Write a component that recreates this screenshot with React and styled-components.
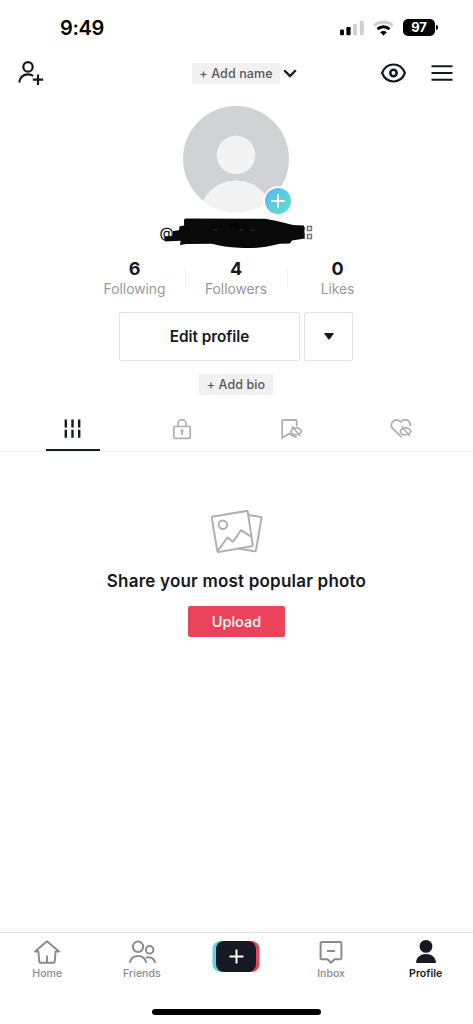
import React from 'react'
import styled, { createGlobalStyle } from 'styled-components'

const color = {
    ink: '#161823',
    black: '#000',
    grey1: '#8a8b8f',
    grey2: '#b0b0b2',
    pill: '#f1f1f2',
    line: '#e3e3e4',
    red: '#ea435a',
    cyan: '#62d3e3',
}

export default function App() {
    return (
        <Screen>
            <GlobalStyle />
            <StatusBar />
            <TopBar />
            <Profile />
            <Tabs />
            <Empty />
            <BottomNav />
        </Screen>
    )
}

function StatusBar() {
    return (
        <Status>
            <Time>9:49</Time>
            <StatusIcons>
                <svg width="24" height="16" viewBox="0 0 24 16">
                    <rect x="0" y="9.5" width="4" height="5.7" rx="1.2" />
                    <rect x="6.4" y="7" width="4.2" height="8.2" rx="1.2" />
                    <rect x="13" y="4" width="4.1" height="11.2" rx="1.2" fill="#d0d0d0" />
                    <rect x="19.7" y="0.8" width="4.1" height="14.4" rx="1.2" fill="#d0d0d0" />
                </svg>
                <svg width="21" height="16" viewBox="0 0 21 16" fill="none" strokeWidth="3">
                    <path d="M1.3 5.7C6.5 .8 14.5 .8 19.7 5.7" stroke="#cfcfcf" />
                    <path d="M4.5 9.2C8 6 13 6 16.5 9.2" stroke="#000" />
                    <path d="M7.1 12.2Q10.5 9.6 13.9 12.2L10.5 15.4Z" fill="#000" />
                </svg>
                <Battery>
                    <BatteryLevel>97</BatteryLevel>
                    <BatteryTip />
                </Battery>
            </StatusIcons>
        </Status>
    )
}

function TopBar() {
    return (
        <Header>
            <svg width="26" height="26" viewBox="0 0 26 26" fill="none" stroke={color.ink} strokeWidth="2.2">
                <circle cx="10" cy="6.9" r="4.7" />
                <path d="M1.2 22.5C2.2 16.8 5.8 14.4 10 14.4c2 0 3.8.5 5.2 1.6M14.8 19.7h10.4M20 14.5v10.4" />
            </svg>
            <HeaderName>
                <Pill width={88}>+ Add name</Pill>
                <svg width="14" height="9" viewBox="0 0 14 9" fill="none" stroke={color.ink} strokeWidth="2.3">
                    <path d="M1.2 1.2L7 7l5.8-5.8" />
                </svg>
            </HeaderName>
            <HeaderRight>
                <svg width="26" height="20" viewBox="0.5 0 26 20" fill="none" stroke={color.ink} strokeWidth="2.2">
                    <path d="M1.6 10C3.8 4.4 8 1.5 13 1.5S22.2 4.4 24.4 10C22.2 15.6 18 18.5 13 18.5S3.8 15.6 1.6 10Z" strokeLinejoin="round" />
                    <circle cx="13" cy="10" r="3.2" strokeWidth="2.5" />
                </svg>
                <svg width="22" height="18" viewBox="0 0 22 18" stroke={color.ink} strokeWidth="2">
                    <path d="M.5 2.3h21M.5 9h21M.5 15.7h21" />
                </svg>
            </HeaderRight>
        </Header>
    )
}

function Profile() {
    return (
        <ProfileBox>
            <Avatar>
                <svg width="106" height="106" viewBox="0 0 106 106">
                    <clipPath id="face"><circle cx="53" cy="53" r="53" /></clipPath>
                    <g clipPath="url(#face)">
                        <rect width="106" height="106" fill="#d0d2d5" />
                        <circle cx="53" cy="49" r="19.3" fill="#f3f3f4" />
                        <circle cx="53" cy="112" r="37.5" fill="#f3f3f4" />
                    </g>
                </svg>
                <AvatarAdd>
                    <svg width="14" height="14" viewBox="0 0 14 14" stroke="#fff" strokeWidth="2">
                        <path d="M7 .3v13.4M.3 7h13.4" />
                    </svg>
                </AvatarAdd>
            </Avatar>
            <Handle>
                <span>@</span>
                <HandleCover width="153" height="34" viewBox="0 0 153 34">
                    <path d="M24 4q0-1.500 2-1.500l79 .3 12 2.200 12 3 4 1 11 .5 1 13-13 2-2 3-10 .3-14 3c-10 1.500-18 1.500-27 1-10-.6-19-1.500-27-4l-26 .3-6 1 .6-4.300L5 25.500l-1-5 9-.5V15l6-.8.600-4 4.500-.6z" fill="#090909" />
                    <path d="M69 11l6-5 6 5" fill="#000" />
                    <path d="M53 14h4M80 14h3M90 14h5" stroke="#333" />
                    <path d="M147.500 10.500h4v4h-4zM147.500 18.500h4v4h-4z" stroke="#77777a" strokeWidth="1.400" fill="none" />
                    <path d="M144.500 11v3M144.500 17v5" stroke="#55555a" strokeWidth="1.200" />
                </HandleCover>
            </Handle>
            <Stats>
                <Stat><Count>6</Count><StatLabel>Following</StatLabel></Stat>
                <Stat><Count>4</Count><StatLabel>Followers</StatLabel></Stat>
                <Stat><Count>0</Count><StatLabel>Likes</StatLabel></Stat>
            </Stats>
            <Actions>
                <Button width={181}>Edit profile</Button>
                <Button width={49}>
                    <svg width="10" height="7" viewBox="0 0 10 7" fill={color.ink}>
                        <path d="M.8 0h8.400q.8.200.4 1L5.600 6.300q-.6.600-1.200 0L.4 1Q0 .200.8 0Z" />
                    </svg>
                </Button>
            </Actions>
            <Pill width={74}>+ Add bio</Pill>
        </ProfileBox>
    )
}

const HiddenEye = () => (
    <g strokeWidth="1.6">
        <path d="M10.300 12.400C11.800 8 18.800 7.500 21 12.400 18.800 17 11.800 16.800 10.300 12.400ZM11.300 7.300l8.500 9.800" />
    </g>
)

function Tabs() {
    return (
        <TabRow>
            <Tab active>
                <svg width="18" height="20" viewBox="0 0 18 20" stroke={color.ink} strokeWidth="2.400">
                    <path d="M1.800 .6v8M8.500 .6v8M15.200 .6v8M1.800 10.800v8M8.500 10.800v8M15.200 10.800v8" />
                </svg>
            </Tab>
            <Tab>
                <svg width="20" height="22" viewBox="0 0 20 22" fill="none" stroke={color.grey2} strokeWidth="1.700">
                    <rect x="1.800" y="8.500" width="16.400" height="11.800" rx="1" />
                    <path d="M6 8.500V5.600a4 4 0 0 1 8 0v2.900M10 13v4" />
                    <circle cx="10" cy="13" r=".8" />
                </svg>
            </Tab>
            <Tab>
                <svg width="23" height="20" viewBox="-0.5 0 23 20" fill="none" stroke={color.grey2} strokeWidth="1.800">
                    <path d="M16.200 7.500V2.200Q16.200 1 15 1H2.900Q1.700 1 1.700 2.200V18.600L8.900 14.800 16.200 18.600" />
                    <HiddenEye />
                </svg>
            </Tab>
            <Tab>
                <svg width="23" height="20" viewBox="-1 0 23 20" fill="none" stroke={color.grey2} strokeWidth="1.800">
                    <path d="M11.500 18L2.600 9.500C-1.500 4.200 5.500-2.500 10.700 3 15-1.800 20.800 1.500 20 7.200" />
                    <HiddenEye />
                </svg>
            </Tab>
        </TabRow>
    )
}

function Empty() {
    return (
        <EmptyBox>
            <svg width="52" height="44" viewBox="0.5 0.3 52 44" fill="none" stroke={color.grey2} strokeWidth="2" strokeLinejoin="round">
                <path d="M1.700 7.100L36 1.200Q37 1 37.200 2L42.200 35.200Q42.300 36.300 41.300 36.500L8 42.300Q7 42.400 6.800 41.400L1.300 8.200Q1.200 7.300 1.700 7.100Z" />
                <path d="M37.800 5.200L50.200 7.200Q51.200 7.400 51 8.400L45.500 40.500Q45.300 41.700 44.200 41.500L28.500 39M7 41.500L17 27.800l5.500 4.200L30.500 20.500 40.500 27" />
                <circle cx="12.400" cy="15" r="4.200" />
            </svg>
            <EmptyTitle>Share your most popular photo</EmptyTitle>
            <Upload>Upload</Upload>
        </EmptyBox>
    )
}

function BottomNav() {
    return (
        <Nav>
            <NavItems>
                <NavItem>
                    <svg width="26" height="26" viewBox="0 -0.5 26 26" fill="none" stroke={color.grey1} strokeWidth="1.900" strokeLinejoin="round">
                        <path d="M1 12L13 1.800 25 12H21.600L20.700 22.200Q20.600 23.200 19.600 23.200H6.400Q5.400 23.200 5.300 22.200L4.400 12ZM13 16v7" />
                    </svg>
                    <NavLabel>Home</NavLabel>
                </NavItem>
                <NavItem>
                    <svg width="28" height="26" viewBox="0 -0.5 28 26" fill="none" stroke={color.grey1} strokeWidth="2">
                        <circle cx="10" cy="7.300" r="5.200" />
                        <circle cx="21.600" cy="10.300" r="3.800" />
                        <path d="M1.800 23.300C2.800 18.700 6 16.600 10 16.600s7.200 2.100 8.200 6.700M18 18.300C21.500 16.700 26.300 18.300 27 23.300" />
                    </svg>
                    <NavLabel>Friends</NavLabel>
                </NavItem>
                <NavItem>
                    <Create>
                        <svg width="15" height="15" viewBox="0 0 15 15" stroke="#fff" strokeWidth="2">
                            <path d="M7.500 .5v14M.5 7.500h14" />
                        </svg>
                    </Create>
                </NavItem>
                <NavItem>
                    <svg width="24" height="26" viewBox="0 0 24 26" fill="none" stroke={color.grey1} strokeWidth="2">
                        <path d="M2.600 3h18.800q1 0 1 1v15.200q0 1-1 1H15.500L12 23.800 8.500 20.200H2.600q-1 0-1-1V4q0-1 1-1ZM8 12h8" strokeLinejoin="round" />
                    </svg>
                    <NavLabel>Inbox</NavLabel>
                </NavItem>
                <NavItem>
                    <svg width="22" height="26" viewBox="0 0 22 26" fill={color.ink}>
                        <circle cx="11" cy="7.400" r="6.400" />
                        <path d="M1 23.300C1.800 18 5.500 15 11 15s9.200 3 10 8.300q0 .700-.7.700H1.700Q1 24 1 23.300Z" />
                    </svg>
                    <NavLabel active>Profile</NavLabel>
                </NavItem>
            </NavItems>
            <HomeIndicator />
        </Nav>
    )
}


const GlobalStyle = createGlobalStyle`
* {
    box-sizing: border-box;
}
body {
    margin: 0;
    background: #fff;
}
svg {
    display: block;
    flex-shrink: 0;
}
`

const Screen = styled.div`
display: flex;
flex-direction: column;
width: 473px;
height: 1024px;
overflow: hidden;
color: ${color.ink};
font-family: Inter, 'Liberation Sans', sans-serif;
`

const Status = styled.div`
display: flex;
justify-content: space-between;
height: 50px;
padding: 15px 35px 0 60px;
`
const Time = styled.div`
color: ${color.black};
font-size: 20px;
font-weight: 600;
letter-spacing: -0.3px;
line-height: 27px;
`
const StatusIcons = styled.div`
display: flex;
align-items: center;
gap: 9px;
height: 25px;
`
const Battery = styled.div`
display: flex;
align-items: center;
gap: 1px;
`
const BatteryLevel = styled.div`
width: 32px;
height: 17px;
border-radius: 5px;
background: ${color.black};
color: #fff;
font-size: 13px;
font-weight: 700;
line-height: 17px;
text-align: center;
`
const BatteryTip = styled.div`
width: 2px;
height: 5px;
border-radius: 0 2px 2px 0;
background: ${color.black};
`

const Header = styled.div`
display: grid;
grid-template-columns: 174px 1fr 72px;
align-items: center;
height: 46px;
padding: 0 20px 0 18px;
`
const HeaderName = styled.div`
display: flex;
align-items: center;
gap: 3px;
`
const HeaderRight = styled.div`
display: flex;
align-items: center;
justify-content: space-between;
`

const Pill = styled.div`
width: ${p => p.width}px;
height: 21px;
border-radius: 2px;
background: ${color.pill};
color: #57585e;
font-size: 12.5px;
font-weight: 500;
letter-spacing: 0.1px;
line-height: 21px;
text-align: center;
white-space: nowrap;
`

const ProfileBox = styled.div`
display: flex;
flex-direction: column;
align-items: center;
height: 311px;
padding: 10px 1px 0 0;
`
const Avatar = styled.div`
position: relative;
`
const AvatarAdd = styled.div`
position: absolute;
right: -4px;
bottom: -4px;
display: flex;
align-items: center;
justify-content: center;
width: 30px;
height: 30px;
border: 2px solid #fff;
border-radius: 50%;
background: linear-gradient(135deg, #55b7f2, #62e0cd);
`
const Handle = styled.div`
position: relative;
width: 153px;
height: 32px;
margin-top: 4px;
font-size: 14.5px;
font-weight: 500;
line-height: 33px;
`
const HandleCover = styled.svg`
position: absolute;
top: 0;
left: 0;
`

const Stats = styled.div`
display: flex;
margin-top: 10px;
`
const Stat = styled.div`
display: flex;
flex-direction: column;
align-items: center;
width: 101.5px;
height: 40px;

& + & {
    background: linear-gradient(#f3f3f3, #f3f3f3) left 10px / 1px 20px no-repeat;
}
`
const Count = styled.div`
font-size: 18px;
font-weight: 700;
line-height: 22px;
`
const StatLabel = styled.div`
color: #97989c;
font-size: 13.8px;
line-height: 19px;
`

const Actions = styled.div`
display: flex;
gap: 4px;
margin: 14px 0 13px;
`
const Button = styled.div`
display: flex;
align-items: center;
justify-content: center;
width: ${p => p.width}px;
height: 49px;
border: 1px solid ${color.line};
border-radius: 2px;
font-size: 15.3px;
font-weight: 600;
`

const TabRow = styled.div`
display: flex;
justify-content: space-around;
height: 45px;
padding: 0 18px;
border-bottom: 1px solid #f3f3f3;
`
const Tab = styled.div`
display: flex;
align-items: center;
justify-content: center;
width: 54px;
height: 44px;
padding-top: 1px;
border-bottom: 2px solid ${p => p.active ? color.ink : 'transparent'};
`

const EmptyBox = styled.div`
display: flex;
flex: 1;
flex-direction: column;
align-items: center;
padding-top: 58px;
`
const EmptyTitle = styled.div`
margin-top: 15px;
font-size: 17px;
font-weight: 600;
letter-spacing: 0.2px;
line-height: 24px;
white-space: nowrap;
`
const Upload = styled.div`
width: 97px;
height: 31px;
margin-top: 13px;
border-radius: 2px;
background: ${color.red};
color: #fff;
font-size: 14.5px;
font-weight: 500;
line-height: 31px;
text-align: center;
`

const Nav = styled.div`
display: flex;
flex-direction: column;
align-items: center;
justify-content: space-between;
height: 92px;
padding-bottom: 9px;
border-top: 1px solid ${color.line};
`
const NavItems = styled.div`
display: flex;
width: 100%;
padding-top: 6px;
`
const NavItem = styled.div`
display: flex;
flex: 1;
flex-direction: column;
align-items: center;
`
const NavLabel = styled.div`
margin-top: 1px;
color: ${p => p.active ? color.ink : color.grey1};
font-size: 10.6px;
font-weight: ${p => p.active ? 600 : 500};
line-height: 16px;
`
const Create = styled.div`
display: flex;
align-items: center;
justify-content: center;
width: 40px;
height: 31px;
margin-top: 2px;
border-radius: 8px;
background: ${color.ink};
box-shadow: -3.5px 0 ${color.cyan}, 3.5px 0 ${color.red};
`
const HomeIndicator = styled.div`
width: 169px;
height: 6px;
border-radius: 3px;
background: ${color.black};
`
